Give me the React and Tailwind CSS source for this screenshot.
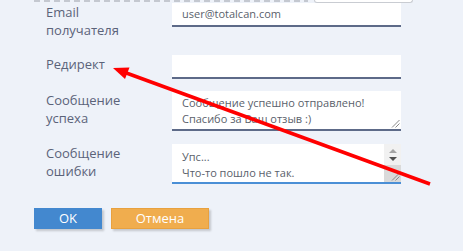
import React from "react";

function Grip() {
  return (
    <svg width="9" height="9" viewBox="0 0 9 9" className="block">
      <line x1="8.5" y1="1" x2="1" y2="8.5" stroke="#8a8a8a" strokeWidth="1" />
      <line x1="8.5" y1="4.5" x2="4.5" y2="8.5" stroke="#8a8a8a" strokeWidth="1" />
    </svg>
  );
}

function Label({ children }) {
  return (
    <div className="w-[126px] shrink-0 text-[13px] leading-[18px] text-[#5b6379]">
      {children}
    </div>
  );
}

export default function App() {
  return (
    <div className="relative h-[251px] w-[463px] overflow-hidden bg-[#eef2f9] font-['Open_Sans',sans-serif]">
      {/* top strip */}
      <div className="flex h-[3px] items-start">
        <div className="ml-[34px] h-[2px] w-[274px] bg-[repeating-linear-gradient(90deg,#c4c8d0_0_6px,transparent_6px_10px)]" />
        <div className="ml-[6px] h-[3px] w-[99px] rounded-b-[4px] border border-t-0 border-[#c9ccd2] bg-white" />
      </div>

      <div className="flex flex-col pl-[46px]">
        {/* Email */}
        <div className="flex items-start">
          <Label>
            Email
            <br />
            получателя
          </Label>
          <div className="flex h-[24px] w-[229px] items-center border-b-2 border-[#5d6a88] bg-white pl-[10px] text-[11px] text-[#5a5f6b]">
            user@totalcan.com
          </div>
        </div>

        {/* Redirect */}
        <div className="mt-[16px] flex items-start">
          <Label>Редирект</Label>
          <div className="h-[24px] w-[229px] border-b-2 border-[#5d6a88] bg-white" />
        </div>

        {/* Success */}
        <div className="mt-[12px] flex items-start">
          <Label>
            Сообщение
            <br />
            успеха
          </Label>
          <div className="relative h-[40px] w-[229px] border-b-2 border-[#5d6a88] bg-white pl-[10px] pt-[4px] text-[11px] leading-[16px] text-[#5a5f6b]">
            <div>Сообщение успешно отправлено!</div>
            <div>Спасибо за Ваш отзыв :)</div>
            <div className="absolute bottom-[1px] right-[1px]">
              <Grip />
            </div>
          </div>
        </div>

        {/* Error */}
        <div className="mt-[13px] flex items-start">
          <Label>
            Сообщение
            <br />
            ошибки
          </Label>
          <div className="flex h-[40px] w-[229px] border-b-2 border-[#4a8fd6] bg-white">
            <div className="flex-1 overflow-hidden pl-[10px] pt-[5px] text-[11px] leading-[16px] text-[#5a5f6b]">
              <div>Упс...</div>
              <div>Что-то пошло не так.</div>
              <div>Пожалуйста, попробуйте ещё раз.</div>
            </div>
            <div className="flex w-[17px] flex-col bg-[#f1f1f1]">
              <div className="flex h-[10px] items-end justify-center pb-[1px]">
                <div className="h-0 w-0 border-x-[4px] border-b-[4px] border-x-transparent border-b-[#a3a3a3]" />
              </div>
              <div className="flex h-[10px] items-start justify-center pt-[3px]">
                <div className="h-0 w-0 border-x-[4px] border-t-[4px] border-x-transparent border-t-[#505050]" />
              </div>
              <div className="mt-auto flex h-[17px] items-end justify-end bg-[#dadada] pb-[1px] pr-[1px]">
                <Grip />
              </div>
            </div>
          </div>
        </div>
      </div>

      {/* buttons */}
      <div className="mt-[24px] flex gap-[9px] pl-[34px]">
        <button className="flex h-[21px] w-[68px] items-center justify-center bg-[#4388cf] text-[13px] text-white shadow-[2px_2px_2px_rgba(0,0,0,0.18)]">
          OK
        </button>
        <button className="flex h-[21px] w-[98px] items-center justify-center border border-[#e8a13f] bg-[#f0ad4e] text-[13px] text-white shadow-[2px_2px_2px_rgba(0,0,0,0.18)]">
          Отмена
        </button>
      </div>

      {/* red arrow annotation */}
      <svg
        className="pointer-events-none absolute inset-0"
        width="463"
        height="251"
        viewBox="0 0 463 251"
      >
        <line x1="430" y1="184" x2="125" y2="72.5" stroke="#ff0000" strokeWidth="3.5" />
        <polygon points="113,68 129.5,67.5 125,79" fill="#ff0000" />
      </svg>
    </div>
  );
}
